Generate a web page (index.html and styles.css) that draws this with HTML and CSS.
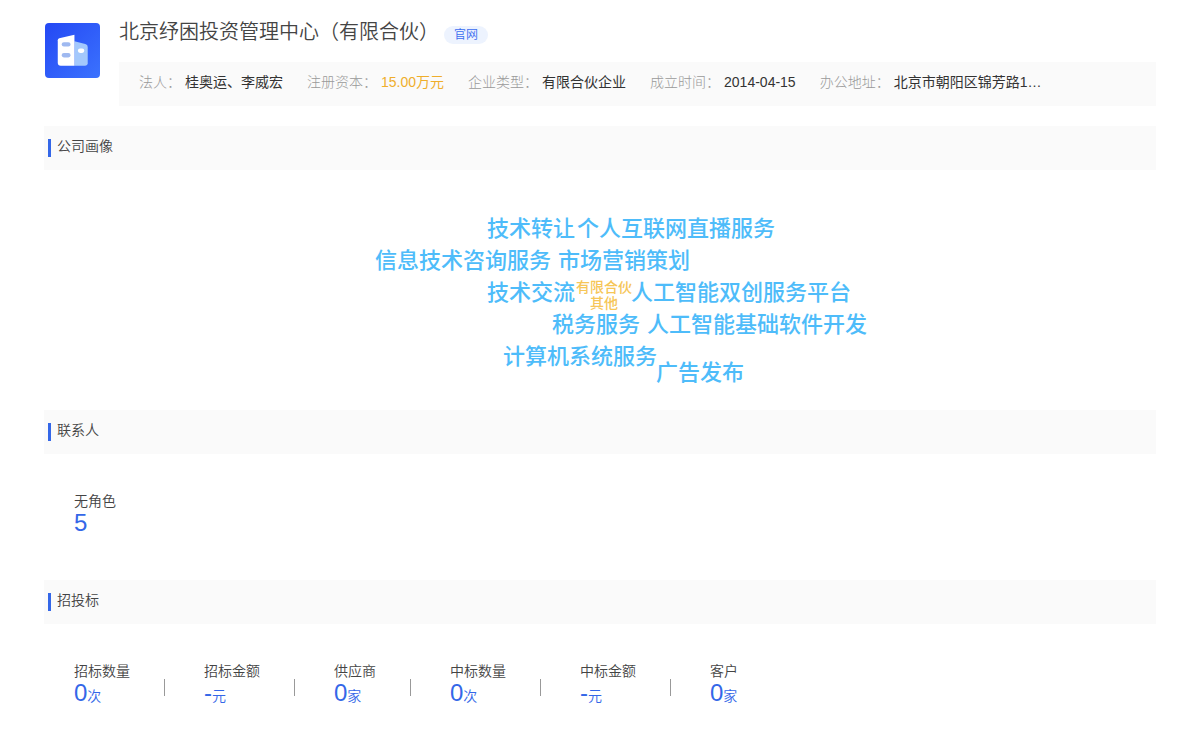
FILE: index.html
```html
<!DOCTYPE html>
<html lang="zh-CN">
<head>
<meta charset="utf-8">
<meta name="viewport" content="width=device-width, initial-scale=1">
<title>北京纾困投资管理中心（有限合伙）</title>
<link rel="stylesheet" href="styles.css">
</head>
<body>
<main class="page">
  <header class="company">
    <svg class="logo" viewBox="0 0 56 56" aria-hidden="true">
      <defs>
        <linearGradient id="logo-bg" x1="0" y1="0" x2="1" y2="1">
          <stop offset="0" stop-color="#2448f4"/>
          <stop offset="1" stop-color="#3b72fe"/>
        </linearGradient>
      </defs>
      <rect width="56" height="56" rx="4" fill="url(#logo-bg)"/>
      <path d="M30 18.500 41 21.500Q43.500 22.200 43.500 24.500V41Q43.500 43.500 41 43.500H30Z" fill="#a3c8fc"/>
      <path d="M30 12V43.500H16Q13 43.500 13 40.500V17.500Q13 16 14.500 15.600Z" fill="#fff"/>
      <rect x="17" y="19.500" width="9" height="4.500" rx="2.200" fill="#9fb9f0"/>
      <rect x="17" y="30.500" width="9" height="4.500" rx="2.200" fill="#9fb9f0"/>
      <rect x="33.500" y="26" width="6.500" height="4.500" rx="2.200" fill="#fff"/>
    </svg>
    <div class="company-body">
      <div class="title-row">
        <h1 class="title">北京纾困投资管理中心（有限合伙）</h1>
        <a class="badge" href="#">官网</a>
      </div>
      <dl class="facts">
        <div class="fact"><dt>法人：</dt><dd>桂奥运、李威宏</dd></div>
        <div class="fact"><dt>注册资本：</dt><dd class="money">15.00万元</dd></div>
        <div class="fact"><dt>企业类型：</dt><dd>有限合伙企业</dd></div>
        <div class="fact"><dt>成立时间：</dt><dd>2014-04-15</dd></div>
        <div class="fact"><dt>办公地址：</dt><dd>北京市朝阳区锦芳路1…</dd></div>
      </dl>
    </div>
  </header>

  <section>
    <h2 class="section-title">公司画像</h2>
    <div class="cloud-area">
      <div class="cloud">
        <span class="word w1">技术转让</span>
        <span class="word w2">个人互联网直播服务</span>
        <span class="word w3">信息技术咨询服务</span>
        <span class="word w4">市场营销策划</span>
        <span class="word w5">技术交流</span>
        <span class="word small w6">有限合伙</span>
        <span class="word small w7">其他</span>
        <span class="word w8">人工智能双创服务平台</span>
        <span class="word w9">税务服务</span>
        <span class="word w10">人工智能基础软件开发</span>
        <span class="word w11">计算机系统服务</span>
        <span class="word w12">广告发布</span>
      </div>
    </div>
  </section>

  <section>
    <h2 class="section-title">联系人</h2>
    <ul class="stats contacts">
      <li class="stat"><span class="label">无角色</span><span class="value">5</span></li>
    </ul>
  </section>

  <section>
    <h2 class="section-title">招投标</h2>
    <ul class="stats">
      <li class="stat"><span class="label">招标数量</span><span class="value">0<small>次</small></span></li>
      <li class="stat"><span class="label">招标金额</span><span class="value">-<small>元</small></span></li>
      <li class="stat"><span class="label">供应商</span><span class="value">0<small>家</small></span></li>
      <li class="stat"><span class="label">中标数量</span><span class="value">0<small>次</small></span></li>
      <li class="stat"><span class="label">中标金额</span><span class="value">-<small>元</small></span></li>
      <li class="stat"><span class="label">客户</span><span class="value">0<small>家</small></span></li>
    </ul>
  </section>
</main>
</body>
</html>
```
FILE: styles.css
```css
* {
  box-sizing: border-box;
}

body {
  margin: 0;
  background: #fff;
  color: #444;
  font: 350 14px/20px "Liberation Sans", "Noto Sans CJK SC", sans-serif;
}

h1, h2, dl, dd, ul {
  margin: 0;
  padding: 0;
  font-weight: 350;
}

.page {
  padding: 16px 44px 0;
}

.company {
  display: flex;
  gap: 19px;
  margin-bottom: 20px;
}

.logo {
  flex: none;
  width: 55px;
  height: 55px;
  margin: 7px 0 0 1px;
}

.company-body {
  flex: 1;
  min-width: 0;
}

.title-row {
  display: flex;
  align-items: center;
  gap: 5px;
  height: 32px;
  margin-bottom: 14px;
}

.title {
  font-size: 20px;
  line-height: 32px;
}

.badge {
  margin-top: 6px;
  padding: 0 10px;
  border-radius: 9px;
  background: #edf3fe;
  color: #3b6cf0;
  font-size: 12px;
  line-height: 18px;
  text-decoration: none;
}

.facts {
  display: flex;
  gap: 24px;
  padding: 10px 20px 14px;
  background: #fafafa;
  white-space: nowrap;
}

.fact {
  display: flex;
  gap: 4px;
}

.fact dt {
  color: #999;
  font-weight: 300;
}

.fact dd {
  color: #333;
  font-weight: 400;
}

.fact .money {
  color: #efae2c;
}

.section-title {
  display: flex;
  align-items: flex-start;
  gap: 6px;
  height: 44px;
  padding: 10px 4px 0;
  background: #fafafa;
  font-size: 14px;
  line-height: 20px;
}

.section-title::before {
  content: "";
  width: 3px;
  height: 18px;
  margin-top: 3px;
  background: #3467e8;
}

.cloud-area {
  display: flex;
  justify-content: center;
  padding: 40px 0 20px;
}

.cloud {
  position: relative;
  width: 500px;
  height: 180px;
}

.word {
  position: absolute;
  color: #4ebcfa;
  font-size: 22px;
  font-weight: 500;
  line-height: 32px;
  white-space: nowrap;
}

.small {
  color: #f6c658;
  font-size: 14px;
  line-height: 16px;
}

.w1 { left: 137px; top: 3px; }
.w2 { left: 227px; top: 3px; }
.w3 { left: 25px; top: 35px; }
.w4 { left: 208px; top: 35px; }
.w5 { left: 137px; top: 67px; }
.w6 { left: 226px; top: 69px; }
.w7 { left: 240px; top: 85px; }
.w8 { left: 281px; top: 67px; }
.w9 { left: 202px; top: 99px; }
.w10 { left: 297px; top: 99px; }
.w11 { left: 153px; top: 131px; }
.w12 { left: 306px; top: 147px; }

.stats {
  display: flex;
  padding: 37px 30px;
  list-style: none;
}

.contacts {
  padding-bottom: 45px;
}

.stat {
  position: relative;
  display: flex;
  flex-direction: column;
}

.stat + .stat {
  margin-left: 74px;
}

.stat + .stat::before {
  content: "";
  position: absolute;
  top: 18px;
  left: -40px;
  width: 1px;
  height: 17px;
  background: #999;
}

.label {
  line-height: 20px;
}

.value {
  color: #3467e8;
  font-size: 24px;
  line-height: 24px;
}

.value small {
  font-size: 14px;
}
```
